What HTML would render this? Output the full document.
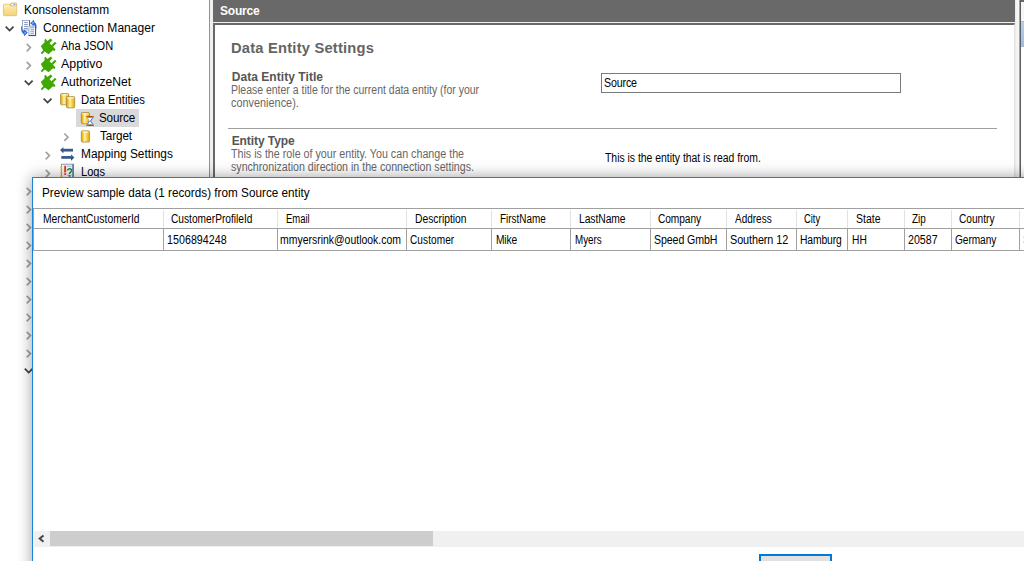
<!DOCTYPE html>
<html><head><meta charset="utf-8">
<style>
*{box-sizing:border-box;margin:0;padding:0}
html,body{width:1024px;height:561px;overflow:hidden;background:#fff}
body{position:relative;font-family:"Liberation Sans",sans-serif;color:#000}
.abs{position:absolute}
.tx{position:absolute;white-space:nowrap;font-family:"Liberation Sans",sans-serif}
svg{position:absolute;left:0;top:0;overflow:visible}
</style></head><body>

<!-- left tree background -->
<div class="abs" id="tree" style="left:0;top:0;width:209px;height:561px;background:#fff"></div>
<div class="abs" id="sel" style="left:76px;top:109px;width:63px;height:18px;background:#d9d9d9"></div>

<!-- splitter -->
<div class="abs" style="left:209px;top:0;width:1px;height:561px;background:#8e939b"></div>
<div class="abs" style="left:210px;top:0;width:3px;height:561px;background:#f0f0f0"></div>

<!-- right panel -->
<div class="abs" id="hdr" style="left:213px;top:0;width:802px;height:22px;background:#696969"></div>
<div class="abs" style="left:213px;top:22px;width:802px;height:1px;background:#f0f0f0"></div>
<div class="abs" id="pnl" style="left:213px;top:23px;width:802px;height:538px;background:#fff;border-left:2px solid #696969;border-top:2px solid #696969;border-right:1px solid #e3e3e3"></div>
<div class="abs" style="left:1015px;top:0;width:4px;height:561px;background:linear-gradient(90deg,#e6e6e6 0,#f2f2f2 30%,#f6f6f6 100%)"></div>
<div class="abs" style="left:1019px;top:0;width:1px;height:561px;background:#a4a4a4"></div>
<div class="abs" style="left:1020px;top:0;width:1px;height:561px;background:#5e5e5e"></div>
<div class="abs" style="left:1021px;top:0;width:3px;height:22px;background:#f6f6f6;border-top:2px solid #696969;border-bottom:1px solid #b8b8b8"></div>
<div class="abs" style="left:1021px;top:22px;width:3px;height:25px;background:linear-gradient(#b6cfec,#9dbce3)"></div>

<div class="abs" id="inpbox" style="left:601px;top:73px;width:300px;height:20px;border:1px solid #7a7a7a;background:#fff"></div>
<div class="abs" style="left:228px;top:128px;width:769px;height:1px;background:#a0a0a0"></div>

<!-- tree icons -->
<svg id="icons" width="209" height="561" viewBox="0 0 209 561">
<defs>
  <linearGradient id="fold" x1="0" y1="0" x2="0" y2="1"><stop offset="0" stop-color="#fdeeb8"/><stop offset="1" stop-color="#f3d176"/></linearGradient>
  <linearGradient id="cyl" x1="0" y1="0" x2="1" y2="0"><stop offset="0" stop-color="#e4a000"/><stop offset=".2" stop-color="#f4c430"/><stop offset=".42" stop-color="#fff3b0"/><stop offset=".68" stop-color="#f7cd40"/><stop offset="1" stop-color="#e9aa0a"/></linearGradient>
  <linearGradient id="bar" x1="0" y1="0" x2="1" y2="0"><stop offset="0" stop-color="#e07a22"/><stop offset=".5" stop-color="#9a3a06"/><stop offset="1" stop-color="#e07a22"/></linearGradient>
  <linearGradient id="arr" x1="0" y1="0" x2="0" y2="1"><stop offset="0" stop-color="#4a74a6"/><stop offset="1" stop-color="#1f3f69"/></linearGradient>
  <g id="cg"><path d="M0,0 l3.7,3.7 l-3.7,3.7" fill="none" stroke="#a3a3a3" stroke-width="1.7"/></g>
  <g id="cv"><path d="M0,0 l3.9,3.9 l3.9,-3.9" fill="none" stroke="#404040" stroke-width="1.7"/></g>
  <g id="plug"><path fill="#40a800" d="M5.5,0.8 L7.3,3 L10.8,0.6 L12.4,2.2 L9.5,5.2 L11.5,7.3 L15,3.8 L16.5,5.3 L13,8.8 L15.5,11.5 L14.5,13 L13,12.2 L8.5,16.2 L4.8,13.4 L2,16.3 L0.7,15 L3.2,12.3 L0.8,8 L4.5,4.5 L4.5,1.8 Z"/></g>
  <g id="cyl1"><path d="M0.3,1.5 q0,-1.2 1.2,-1.2 h5.8 q1.2,0 1.2,1.2 v8.9 q0,1.2 -1.2,1.2 h-5.8 q-1.2,0 -1.2,-1.2 z" fill="url(#cyl)" stroke="#9a8446" stroke-width=".7"/><ellipse cx="4.4" cy="1.6" rx="3.6" ry=".85" fill="#fdf2c0" opacity=".85"/></g>
</defs>
<!-- folder -->
<path d="M10.3,6 v-2 a1,1 0 0 1 1,-1 h4.4 a1,1 0 0 1 1,1 v2 z" fill="#f7dc8e" stroke="#d5b25a" stroke-width=".7"/>
<rect x="11.5" y="4" width="4.2" height="1.6" fill="#fff"/><rect x="13.6" y="4.1" width="1.6" height="1" fill="#4a90e2"/>
<path d="M3.4,5.2 a1,1 0 0 1 1,-1 h4.8 l1.4,1.8 h5.1 a1,1 0 0 1 1,1 v7.7 a1,1 0 0 1 -1,1 h-11.3 a1,1 0 0 1 -1,-1 z" fill="url(#fold)" stroke="#d9b864" stroke-width=".7"/>
<!-- connection manager -->
<g>
 <path d="M30.2,23.2 L33.8,19.8 L34.3,22 Q37.8,24 35.9,30 L34.6,29.2 Q35.6,25.6 33.7,24.3 L34.5,26.8 Z" fill="#2f66d6"/>
 <path d="M31.5,23 L33.4,21.2 L33.6,24.4 Z" fill="#8db4f2"/>
 <path d="M27.6,32.6 L24.2,36 L23.7,33.8 Q20.3,32 21.4,26 L22.7,26.8 Q22.2,30.4 24.3,31.6 L23.5,29.2 Z" fill="#2f66d6"/>
 <path d="M26.3,32.7 L24.6,34.4 L24.3,31.4 Z" fill="#8db4f2"/>
 <rect x="22.5" y="20.4" width="7" height="9.6" fill="#fff" stroke="#8a9cbc" stroke-width=".8"/>
 <path d="M29.6,20.4 v9.6" stroke="#46587e" stroke-width=".9"/>
 <path d="M24.1,22.6 h3.8 M24.1,24.6 h3.8 M24.1,26.6 h3.8 M24.1,28.6 h3.8" stroke="#6f88bd" stroke-width=".9"/>
 <path d="M27.6,32.6 L24.2,36 L23.7,33.8 L22.6,32.6 L24.3,31.6 L23.5,29.2 Z" fill="#2f66d6"/>
 <path d="M26.3,32.7 L24.6,34.4 L24.3,31.4 Z" fill="#8db4f2"/>
 <rect x="28.9" y="26.2" width="6.6" height="9.3" fill="#fff" stroke="#8a9cbc" stroke-width=".8"/>
 <path d="M35.6,26.2 v9.5 M28.6,35.6 h7.2" stroke="#2f3f62" stroke-width=".9"/>
 <path d="M30.3,27.8 h3.8 M30.3,29.8 h3.8 M30.3,31.8 h3.8 M30.3,33.8 h3.8" stroke="#6f88bd" stroke-width=".9"/>
</g>
<use href="#cv" x="5.7" y="26.7"/>
<!-- plugs -->
<use href="#plug" x="40" y="38"/><use href="#plug" x="40" y="56"/><use href="#plug" x="40" y="74"/>
<use href="#cg" x="26.7" y="43.9"/><use href="#cg" x="26.7" y="61.9"/>
<use href="#cv" x="24.8" y="80.7"/>
<!-- data entities -->
<use href="#cv" x="43.7" y="98.7"/>
<g transform="translate(60.2,93.2) scale(1,1.0)"><use href="#cyl1"/></g>
<g transform="translate(66.2,96.3)"><use href="#cyl1"/></g>
<!-- source -->
<g transform="translate(81,112.2)"><use href="#cyl1"/></g>
<path d="M87,117.2 h6 l-2.4,3.8 l2.4,3.7 h-6 l2.4,-3.7 z" fill="#fff" stroke="#9ab0c8" stroke-width=".8"/><path d="M93,117.4 l-2.4,3.6 l2.4,3.6 M89.4,121 l-2,3.4" fill="none" stroke="#3c8ce0" stroke-width="1"/>
<rect x="86.1" y="116" width="7.9" height="1.4" fill="url(#bar)"/><rect x="86.1" y="124.6" width="7.9" height="1.4" fill="url(#bar)"/>
<!-- target -->
<use href="#cg" x="64.3" y="133.5"/>
<g transform="translate(81,130.5)"><use href="#cyl1"/></g>
<!-- mapping -->
<use href="#cg" x="45.7" y="151.9"/>
<path d="M60,150.1 l3.4,-3.1 v1.8 h9.6 v2.7 h-9.6 v1.8 z" fill="url(#arr)"/>
<path d="M74.4,157.4 l-3.4,-3.2 v1.9 h-9.7 v2.7 h9.7 v1.9 z" fill="url(#arr)"/>
<!-- logs -->
<use href="#cg" x="45.7" y="169.9"/>
<g>
 <rect x="61.6" y="164.2" width="12" height="14" fill="#f3f6fb" stroke="#6b8ab5" stroke-width=".8"/>
 <rect x="72.2" y="164.2" width="1.6" height="14" fill="#5c7eac"/>
 <path d="M67,166.3 h4.5 M67,175.3 h4.5" stroke="#8aa8d8" stroke-width=".7"/>
 <g fill="#f0b820"><ellipse cx="61.2" cy="167" rx="1.3" ry=".8"/><ellipse cx="61.2" cy="170" rx="1.3" ry=".8"/><ellipse cx="61.2" cy="173" rx="1.3" ry=".8"/><ellipse cx="61.2" cy="176" rx="1.3" ry=".8"/></g>
 <rect x="64.2" y="165.8" width="1.9" height="6.6" fill="#f03220"/><rect x="64.2" y="173.3" width="1.9" height="1.6" fill="#f03220"/>
 <path d="M67.6,170.6 a2,1.9 0 1 1 3,1.6 q-1,.7 -1,1.8" fill="none" stroke="#1d8a1d" stroke-width="1.5"/><rect x="68.8" y="175.2" width="1.6" height="1.6" fill="#1d8a1d"/>
</g>
<!-- more rows -->
<use href="#cg" x="26.7" y="187.9"/><use href="#cg" x="26.7" y="205.9"/><use href="#cg" x="26.7" y="223.9"/><use href="#cg" x="26.7" y="241.9"/><use href="#cg" x="26.7" y="259.9"/>
<use href="#cg" x="26.7" y="277.9"/><use href="#cg" x="26.7" y="295.9"/><use href="#cg" x="26.7" y="313.9"/><use href="#cg" x="26.7" y="331.9"/><use href="#cg" x="26.7" y="349.9"/>
<use href="#cv" x="24.8" y="368.7"/>
</svg>

<div class="tx" id="t1" style="left:23.70px;top:1.34px;font-size:12px;line-height:18px;font-weight:normal;color:#000;letter-spacing:0.000px;transform:scaleX(0.988);transform-origin:0 0;">Konsolenstamm</div>
<div class="tx" id="t2" style="left:42.70px;top:19.34px;font-size:12px;line-height:18px;font-weight:normal;color:#000;letter-spacing:0.000px;transform:scaleX(1.005);transform-origin:0 0;">Connection Manager</div>
<div class="tx" id="t3" style="left:61.20px;top:37.34px;font-size:12px;line-height:18px;font-weight:normal;color:#000;letter-spacing:0.000px;transform:scaleX(0.92);transform-origin:0 0;">Aha JSON</div>
<div class="tx" id="t4" style="left:61.20px;top:55.34px;font-size:12px;line-height:18px;font-weight:normal;color:#000;letter-spacing:0.000px;transform:scaleX(1.031);transform-origin:0 0;">Apptivo</div>
<div class="tx" id="t5" style="left:61.20px;top:73.34px;font-size:12px;line-height:18px;font-weight:normal;color:#000;letter-spacing:0.000px;transform:scaleX(1.011);transform-origin:0 0;">AuthorizeNet</div>
<div class="tx" id="t6" style="left:80.95px;top:91.34px;font-size:12px;line-height:18px;font-weight:normal;color:#000;letter-spacing:0.000px;transform:scaleX(0.941);transform-origin:0 0;">Data Entities</div>
<div class="tx" id="t7" style="left:99.30px;top:109.34px;font-size:12px;line-height:18px;font-weight:normal;color:#000;letter-spacing:-0.159px;transform:scaleX(0.97);transform-origin:0 0;">Source</div>
<div class="tx" id="t8" style="left:99.95px;top:127.34px;font-size:12px;line-height:18px;font-weight:normal;color:#000;letter-spacing:-0.107px;transform:scaleX(0.977);transform-origin:0 0;">Target</div>
<div class="tx" id="t9" style="left:80.95px;top:145.34px;font-size:12px;line-height:18px;font-weight:normal;color:#000;letter-spacing:0.000px;transform:scaleX(0.991);transform-origin:0 0;">Mapping Settings</div>
<div class="tx" id="t10" style="left:80.95px;top:163.34px;font-size:12px;line-height:18px;font-weight:normal;color:#000;letter-spacing:0.000px;transform:scaleX(0.923);transform-origin:0 0;">Logs</div>
<div class="tx" id="h_src" style="left:220.10px;top:1.84px;font-size:12px;line-height:18px;font-weight:bold;color:#fff;letter-spacing:-0.231px;">Source</div>
<div class="tx" id="h_des" style="left:230.80px;top:37.55px;font-size:14px;line-height:21px;font-weight:bold;color:#646464;letter-spacing:0.204px;transform:scaleX(1.05);transform-origin:0 0;">Data Entity Settings</div>
<div class="tx" id="h_det" style="left:231.70px;top:67.64px;font-size:12px;line-height:18px;font-weight:bold;color:#555;letter-spacing:0.055px;">Data Entity Title</div>
<div class="tx" id="p1a" style="left:231.40px;top:81.34px;font-size:12px;line-height:18px;font-weight:normal;color:#666;letter-spacing:0.000px;transform:scaleX(0.873);transform-origin:0 0;">Please enter a title for the current data entity (for your</div>
<div class="tx" id="p1b" style="left:231.40px;top:94.34px;font-size:12px;line-height:18px;font-weight:normal;color:#666;letter-spacing:0.045px;transform:scaleX(0.901);transform-origin:0 0;">convenience).</div>
<div class="tx" id="inp" style="left:604.40px;top:74.34px;font-size:12px;line-height:18px;font-weight:normal;color:#000;letter-spacing:-0.173px;transform:scaleX(0.889);transform-origin:0 0;">Source</div>
<div class="tx" id="h_et" style="left:231.70px;top:131.54px;font-size:12px;line-height:18px;font-weight:bold;color:#555;letter-spacing:-0.077px;">Entity Type</div>
<div class="tx" id="p2a" style="left:231.40px;top:144.74px;font-size:12px;line-height:18px;font-weight:normal;color:#666;letter-spacing:0.000px;transform:scaleX(0.892);transform-origin:0 0;">This is the role of your entity. You can change the</div>
<div class="tx" id="p2b" style="left:231.40px;top:157.54px;font-size:12px;line-height:18px;font-weight:normal;color:#666;letter-spacing:0.000px;transform:scaleX(0.886);transform-origin:0 0;">synchronization direction in the connection settings.</div>
<div class="tx" id="p3" style="left:604.90px;top:149.34px;font-size:12px;line-height:18px;font-weight:normal;color:#000;letter-spacing:-0.016px;transform:scaleX(0.868);transform-origin:0 0;">This is the entity that is read from.</div>
<!-- dialog -->
<div class="abs" id="dlg" style="left:32px;top:177px;width:1010px;height:400px;background:#fff;border:1px solid #1883d7;box-shadow:0 0 14px 0 rgba(0,0,0,.38)"></div>

<!-- grid -->
<div class="abs" id="grid" style="left:33px;top:208px;width:991px;height:43px;border-top:1px solid #a0a0a0;border-left:1px solid #a0a0a0"></div>
<div class="abs" style="left:33px;top:228px;width:991px;height:1px;background:#a0a0a0"></div>
<div class="abs" style="left:33px;top:250px;width:991px;height:1px;background:#a0a0a0"></div>
<div class="abs" style="left:163px;top:210px;width:1px;height:18px;background:#e2e2e2"></div><div class="abs" style="left:163px;top:229px;width:1px;height:21px;background:#a0a0a0"></div>
<div class="abs" style="left:277px;top:210px;width:1px;height:18px;background:#e2e2e2"></div><div class="abs" style="left:277px;top:229px;width:1px;height:21px;background:#a0a0a0"></div>
<div class="abs" style="left:406px;top:210px;width:1px;height:18px;background:#e2e2e2"></div><div class="abs" style="left:406px;top:229px;width:1px;height:21px;background:#a0a0a0"></div>
<div class="abs" style="left:491px;top:210px;width:1px;height:18px;background:#e2e2e2"></div><div class="abs" style="left:491px;top:229px;width:1px;height:21px;background:#a0a0a0"></div>
<div class="abs" style="left:570px;top:210px;width:1px;height:18px;background:#e2e2e2"></div><div class="abs" style="left:570px;top:229px;width:1px;height:21px;background:#a0a0a0"></div>
<div class="abs" style="left:650px;top:210px;width:1px;height:18px;background:#e2e2e2"></div><div class="abs" style="left:650px;top:229px;width:1px;height:21px;background:#a0a0a0"></div>
<div class="abs" style="left:726px;top:210px;width:1px;height:18px;background:#e2e2e2"></div><div class="abs" style="left:726px;top:229px;width:1px;height:21px;background:#a0a0a0"></div>
<div class="abs" style="left:796px;top:210px;width:1px;height:18px;background:#e2e2e2"></div><div class="abs" style="left:796px;top:229px;width:1px;height:21px;background:#a0a0a0"></div>
<div class="abs" style="left:847px;top:210px;width:1px;height:18px;background:#e2e2e2"></div><div class="abs" style="left:847px;top:229px;width:1px;height:21px;background:#a0a0a0"></div>
<div class="abs" style="left:904px;top:210px;width:1px;height:18px;background:#e2e2e2"></div><div class="abs" style="left:904px;top:229px;width:1px;height:21px;background:#a0a0a0"></div>
<div class="abs" style="left:951px;top:210px;width:1px;height:18px;background:#e2e2e2"></div><div class="abs" style="left:951px;top:229px;width:1px;height:21px;background:#a0a0a0"></div>
<div class="abs" style="left:1019px;top:210px;width:1px;height:18px;background:#e2e2e2"></div><div class="abs" style="left:1019px;top:229px;width:1px;height:21px;background:#a0a0a0"></div>


<!-- scrollbar -->
<div class="abs" style="left:34px;top:531px;width:990px;height:16px;background:#f0f0f0"></div>
<div class="abs" style="left:50px;top:531px;width:383px;height:15px;background:#cdcdcd"></div>
<svg width="1024" height="561"><path d="M43.5,535.5 L39.7,538.6 L43.5,541.7" fill="none" stroke="#454545" stroke-width="2"/></svg>
<!-- button -->
<div class="abs" style="left:759px;top:554px;width:73px;height:20px;background:#e1e1e1;border:2px solid #0078d7"></div>

<div class="tx" id="dt" style="left:41.50px;top:184.34px;font-size:12px;line-height:18px;font-weight:normal;color:#000;letter-spacing:0.010px;transform:scaleX(0.977);transform-origin:0 0;">Preview sample data (1 records) from Source entity</div>
<div class="tx" id="g1" style="left:42.70px;top:209.54px;font-size:12px;line-height:18px;font-weight:normal;color:#000;letter-spacing:0.000px;transform:scaleX(0.862);transform-origin:0 0;">MerchantCustomerId</div>
<div class="tx" id="g2" style="left:171.00px;top:209.54px;font-size:12px;line-height:18px;font-weight:normal;color:#000;letter-spacing:0.000px;transform:scaleX(0.849);transform-origin:0 0;">CustomerProfileId</div>
<div class="tx" id="g3" style="left:285.50px;top:209.54px;font-size:12px;line-height:18px;font-weight:normal;color:#000;letter-spacing:0.000px;transform:scaleX(0.79);transform-origin:0 0;">Email</div>
<div class="tx" id="g4" style="left:414.70px;top:209.54px;font-size:12px;line-height:18px;font-weight:normal;color:#000;letter-spacing:0.000px;transform:scaleX(0.858);transform-origin:0 0;">Description</div>
<div class="tx" id="g5" style="left:499.70px;top:209.54px;font-size:12px;line-height:18px;font-weight:normal;color:#000;letter-spacing:0.000px;transform:scaleX(0.827);transform-origin:0 0;">FirstName</div>
<div class="tx" id="g6" style="left:578.60px;top:209.54px;font-size:12px;line-height:18px;font-weight:normal;color:#000;letter-spacing:-0.070px;transform:scaleX(0.859);transform-origin:0 0;">LastName</div>
<div class="tx" id="g7" style="left:657.90px;top:209.54px;font-size:12px;line-height:18px;font-weight:normal;color:#000;letter-spacing:-0.096px;transform:scaleX(0.849);transform-origin:0 0;">Company</div>
<div class="tx" id="g8" style="left:734.60px;top:209.54px;font-size:12px;line-height:18px;font-weight:normal;color:#000;letter-spacing:0.000px;transform:scaleX(0.832);transform-origin:0 0;">Address</div>
<div class="tx" id="g9" style="left:803.80px;top:209.54px;font-size:12px;line-height:18px;font-weight:normal;color:#000;letter-spacing:0.000px;transform:scaleX(0.781);transform-origin:0 0;">City</div>
<div class="tx" id="g10" style="left:855.80px;top:209.54px;font-size:12px;line-height:18px;font-weight:normal;color:#000;letter-spacing:0.000px;transform:scaleX(0.874);transform-origin:0 0;">State</div>
<div class="tx" id="g11" style="left:912.20px;top:209.54px;font-size:12px;line-height:18px;font-weight:normal;color:#000;letter-spacing:0.000px;transform:scaleX(0.824);transform-origin:0 0;">Zip</div>
<div class="tx" id="g12" style="left:958.70px;top:209.54px;font-size:12px;line-height:18px;font-weight:normal;color:#000;letter-spacing:0.000px;transform:scaleX(0.845);transform-origin:0 0;">Country</div>
<div class="tx" id="c2" style="left:167.20px;top:230.84px;font-size:12px;line-height:18px;font-weight:normal;color:#000;letter-spacing:0.053px;transform:scaleX(0.888);transform-origin:0 0;">1506894248</div>
<div class="tx" id="c3" style="left:280.40px;top:230.84px;font-size:12px;line-height:18px;font-weight:normal;color:#000;letter-spacing:0.000px;transform:scaleX(0.871);transform-origin:0 0;">mmyersrink@outlook.com</div>
<div class="tx" id="c4" style="left:409.90px;top:230.84px;font-size:12px;line-height:18px;font-weight:normal;color:#000;letter-spacing:0.083px;transform:scaleX(0.84);transform-origin:0 0;">Customer</div>
<div class="tx" id="c5" style="left:495.80px;top:230.84px;font-size:12px;line-height:18px;font-weight:normal;color:#000;letter-spacing:-0.192px;transform:scaleX(0.852);transform-origin:0 0;">Mike</div>
<div class="tx" id="c6" style="left:574.60px;top:230.84px;font-size:12px;line-height:18px;font-weight:normal;color:#000;letter-spacing:0.000px;transform:scaleX(0.818);transform-origin:0 0;">Myers</div>
<div class="tx" id="c7" style="left:654.40px;top:230.84px;font-size:12px;line-height:18px;font-weight:normal;color:#000;letter-spacing:-0.105px;transform:scaleX(0.885);transform-origin:0 0;">Speed GmbH</div>
<div class="tx" id="c8" style="left:730.40px;top:230.84px;font-size:12px;line-height:18px;font-weight:normal;color:#000;letter-spacing:-0.093px;transform:scaleX(0.903);transform-origin:0 0;">Southern 12</div>
<div class="tx" id="c9" style="left:800.40px;top:230.84px;font-size:12px;line-height:18px;font-weight:normal;color:#000;letter-spacing:-0.122px;transform:scaleX(0.859);transform-origin:0 0;">Hamburg</div>
<div class="tx" id="c10" style="left:851.70px;top:230.84px;font-size:12px;line-height:18px;font-weight:normal;color:#000;letter-spacing:0.000px;transform:scaleX(0.853);transform-origin:0 0;">HH</div>
<div class="tx" id="c11" style="left:908.40px;top:230.84px;font-size:12px;line-height:18px;font-weight:normal;color:#000;letter-spacing:0.000px;transform:scaleX(0.885);transform-origin:0 0;">20587</div>
<div class="tx" id="c12" style="left:954.80px;top:230.84px;font-size:12px;line-height:18px;font-weight:normal;color:#000;letter-spacing:-0.083px;transform:scaleX(0.845);transform-origin:0 0;">Germany</div>
<div class="tx" id="c13" style="left:1022.80px;top:230.84px;font-size:12px;line-height:18px;font-weight:normal;color:#e07000;letter-spacing:0.000px;transform:scaleX(0.93);transform-origin:0 0;">S</div>
</body></html>
